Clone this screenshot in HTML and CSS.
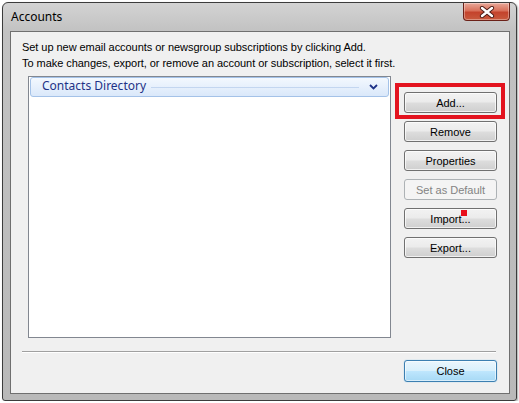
FILE: index.html
```html
<!DOCTYPE html>
<html>
<head>
<meta charset="utf-8">
<title>Accounts</title>
<link rel="stylesheet" href="styles.css">
</head>
<body>
<div class="window">
  <div class="titlebar">
    <span class="title">Accounts</span>
    <div class="close-x">
      <svg width="16" height="12" viewBox="0 0 16 12">
        <path d="M3 2 L13 10 M13 2 L3 10" stroke="#4a1a14" stroke-width="4.2" stroke-linecap="round" fill="none"/>
        <path d="M3 2 L13 10 M13 2 L3 10" stroke="#ffffff" stroke-width="2.4" stroke-linecap="round" fill="none"/>
      </svg>
    </div>
  </div>
  <div class="client">
    <p class="intro">Set up new email accounts or newsgroup subscriptions by clicking Add.<br>To make changes, export, or remove an account or subscription, select it first.</p>
    <div class="main">
      <div class="list">
        <div class="group-header">
          <span class="group-name">Contacts Directory</span>
          <span class="group-line"></span>
          <svg class="chev" width="9" height="6" viewBox="0 0 9 6"><path d="M1 1 L4.5 4.5 L8 1" stroke="#1e3287" stroke-width="1.8" fill="none"/></svg>
        </div>
      </div>
      <div class="buttons">
        <button class="btn btn-add">Add...<span class="highlight"></span></button>
        <button class="btn">Remove</button>
        <button class="btn">Properties</button>
        <button class="btn" disabled>Set as Default</button>
        <button class="btn btn-import">Import...<span class="marker"></span></button>
        <button class="btn">Export...</button>
      </div>
    </div>
    <div class="sep"></div>
    <div class="footer">
      <button class="btn btn-default">Close</button>
    </div>
  </div>
</div>
</body>
</html>
```

FILE: styles.css
```css
html, body {
  margin: 0;
  padding: 0;
  background: #ffffff;
}
body {
  padding: 2px 0 0 2px;
  font-family: "Liberation Sans", Arial, sans-serif;
  font-size: 11px;
  color: #000;
}
.window {
  box-sizing: border-box;
  width: 515px;
  height: 399px;
  border: 1px solid #3c3c3c;
  border-radius: 6px 6px 3px 3px;
  background: linear-gradient(to bottom, #d3d3d3 0px, #c2c2c2 28px, #b9b9b9 100%);
  box-shadow: 1px 1px 2px rgba(0,0,0,0.35);
  padding: 0 0 0 7px;
}
.titlebar {
  height: 28px;
  display: flex;
  justify-content: space-between;
  align-items: flex-start;
}
.title {
  font-family: "Noto Sans", "Open Sans", sans-serif;
  font-size: 12px;
  line-height: 16px;
  margin-top: 6px;
  margin-left: 1px;
  color: #000;
}
.close-x {
  box-sizing: border-box;
  width: 47px;
  height: 18px;
  margin-right: 6px;
  border: 1px solid #6b2118;
  border-top: none;
  border-radius: 0 0 4px 4px;
  background: linear-gradient(to bottom, #e9a99a 0%, #d8705a 45%, #c4432c 55%, #c85a3e 100%);
  box-shadow: inset 0 0 0 1px rgba(255,255,255,0.35);
  display: flex;
  align-items: center;
  justify-content: center;
}
.client {
  box-sizing: border-box;
  width: 500px;
  height: 363px;
  border: 1px solid #6f6f6f;
  background: #f0f0f0;
  padding: 0 0 0 11px;
}
.intro {
  margin: 7px 0 0 0;
  line-height: 16px;
  white-space: nowrap;
  letter-spacing: -0.05px;
}
.main {
  display: flex;
  margin-top: 5px;
}
.list {
  box-sizing: border-box;
  width: 363px;
  height: 262px;
  margin-left: 6px;
  border: 1px solid #828790;
  background: #fff;
  padding: 0 1px 0 1px;
}
.group-header {
  box-sizing: border-box;
  height: 20px;
  margin-top: 0;
  border: 1px solid #a4c2e8;
  border-radius: 3px;
  background: linear-gradient(to bottom, #f3f8fe, #dae8fa);
  display: flex;
  align-items: center;
  padding: 0 10px 0 11px;
}
.group-name {
  font-family: "Noto Sans", "Open Sans", sans-serif;
  font-size: 12px;
  color: #1e3287;
  line-height: 16px;
  margin-top: -2px;
}
.group-line {
  flex: 1;
  height: 1px;
  background: #c3d6f0;
  margin: 0 10px 0 5px;
}
.chev {
  display: block;
  margin-top: -1px;
}
.buttons {
  display: flex;
  flex-direction: column;
  gap: 8px;
  margin-left: 13px;
  padding-top: 16px;
}
.btn {
  position: relative;
  box-sizing: border-box;
  width: 93px;
  height: 21px;
  padding: 0;
  border: 1px solid #707070;
  border-radius: 3px;
  background: linear-gradient(to bottom, #f2f2f2 0%, #ebebeb 48%, #dddddd 52%, #cfcfcf 100%);
  box-shadow: inset 0 0 0 1px rgba(255,255,255,0.7);
  font-family: "Liberation Sans", Arial, sans-serif;
  font-size: 11px;
  color: #000;
  text-align: center;
}
.btn:disabled {
  border-color: #adb2b5;
  background: #f4f4f4;
  box-shadow: none;
  color: #838383;
}
.highlight {
  position: absolute;
  left: -10px;
  top: -10px;
  width: 102px;
  height: 28px;
  border: 4px solid #e3131f;
}
.marker {
  position: absolute;
  left: 56px;
  top: 1px;
  width: 6px;
  height: 6px;
  background: #e8101c;
}
.sep {
  width: 474px;
  height: 1px;
  background: #a0a0a0;
  border-bottom: 1px solid #ffffff;
  margin-top: 13px;
}
.footer {
  margin-top: 7px;
  padding-left: 382px;
}
.btn-default {
  height: 22px;
  border-color: #3c7fb1;
  background: linear-gradient(to bottom, #eaf6fd 0%, #d9f0fc 48%, #bee6fd 52%, #a7d9f5 100%);
  box-shadow: inset 0 0 0 1px rgba(255,255,255,0.55), 0 0 1px #5fb2e8;
}
```
